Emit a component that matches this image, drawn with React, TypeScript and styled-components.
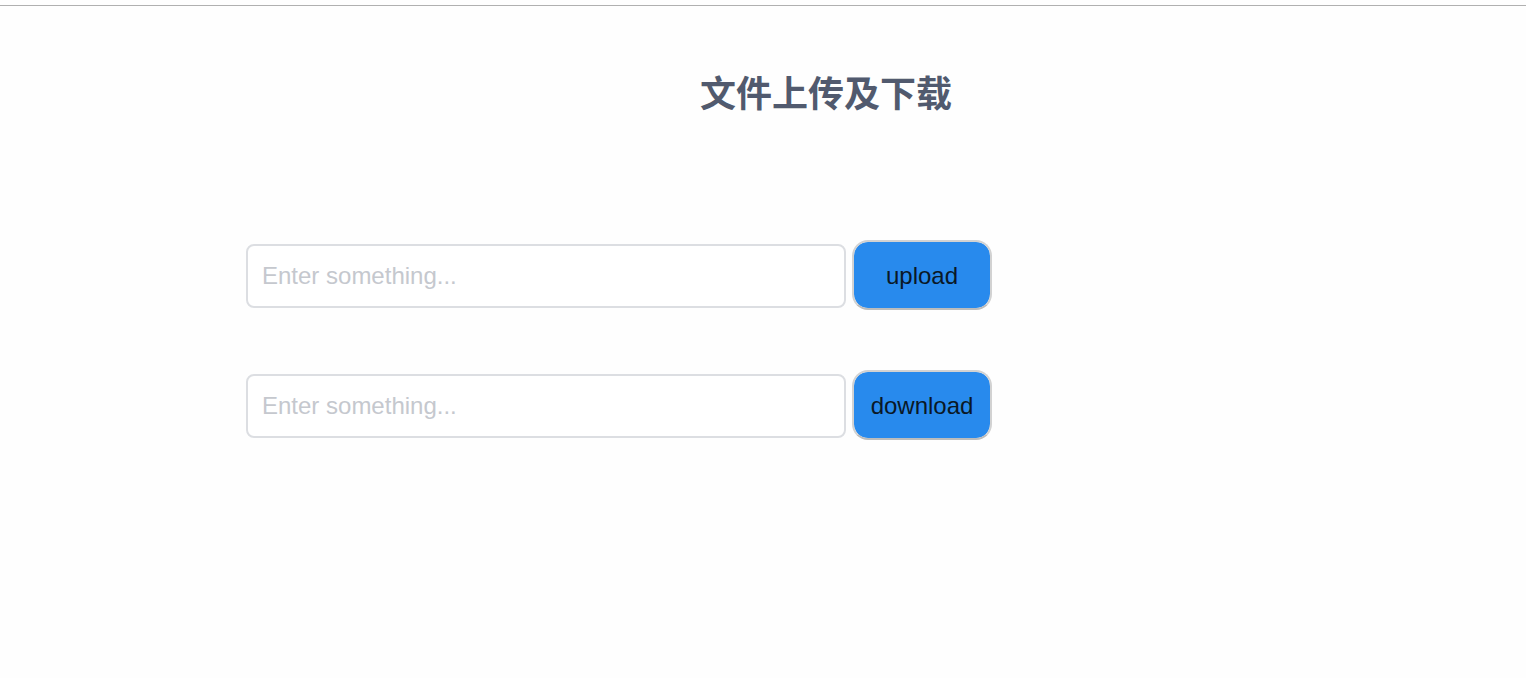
import React from "react";
import styled, { createGlobalStyle } from "styled-components";

const GlobalStyle = createGlobalStyle`
  * {
    box-sizing: border-box;
  }
  body {
    margin: 0;
    background: #fefefe;
    color: #515a6e;
    font-family: "Liberation Sans", "Noto Sans CJK SC", sans-serif;
    font-size: 24px;
  }
`;

const Page = styled.div`
  padding-top: 5px;
`;

const Divider = styled.hr`
  height: 1px;
  margin: 0;
  border: 0;
  background: #b0b0b0;
`;

const Content = styled.main`
  padding: 61px 0 0 126px;
`;

const Title = styled.h1`
  margin: 0;
  color: #515a6e;
  font-family: "Noto Sans CJK SC", sans-serif;
  font-size: 36px;
  font-weight: 700;
  line-height: 48px;
  text-align: center;
`;

const Forms = styled.div`
  display: flex;
  flex-direction: column;
  gap: 60px;
  margin-top: 125px;
  padding-left: 120px;
`;

const FormRow = styled.form`
  display: flex;
  align-items: baseline;
  gap: 6px;
`;

const TextInput = styled.input`
  width: 600px;
  height: 64px;
  padding: 0 14px;
  border: 2px solid #dcdee2;
  border-radius: 8px;
  background: #fff;
  color: #515a6e;
  font-family: inherit;
  font-size: 24px;
  outline: none;

  &::placeholder {
    color: #c5c8ce;
    opacity: 1;
  }

  &:focus {
    border-color: #57a3f3;
  }
`;

const ActionButton = styled.button`
  width: 140px;
  height: 70px;
  padding: 2px 0 0;
  border: 2px solid #d2d2d2;
  border-bottom-color: #bcbcbc;
  border-radius: 16px;
  background: #288aed;
  background-clip: padding-box;
  color: #0a1826;
  font-family: inherit;
  font-size: 24px;
  cursor: pointer;
`;

const actions = ["upload", "download"];

export default function App() {
  return (
    <Page>
      <GlobalStyle />
      <Divider />
      <Content>
        <Title lang="zh-CN">文件上传及下载</Title>
        <Forms>
          {actions.map((action) => (
            <FormRow key={action} onSubmit={(event: React.FormEvent) => event.preventDefault()}>
              <TextInput type="text" aria-label={action} placeholder="Enter something..." />
              <ActionButton type="submit">{action}</ActionButton>
            </FormRow>
          ))}
        </Forms>
      </Content>
    </Page>
  );
}
